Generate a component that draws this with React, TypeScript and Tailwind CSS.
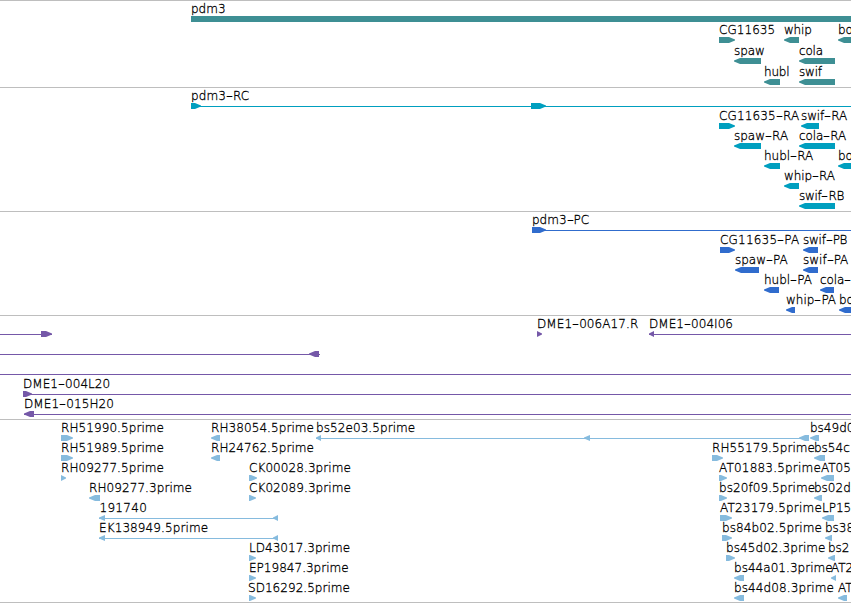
import { Fragment } from "react";
import clsx from "clsx";

type Dir = "left" | "right" | "none";
type Feature = {
  label?: string;
  start: number;
  labelStart?: number;
  spacing?: number;
  line?: number;
  // [start, end, direction]
  exons: [number, number, Dir][];
};
type TrackData = { id: string; color: string; gap?: boolean; rows: Feature[][] };

const VIEW_END = 851;

const feature = (label: string, start: number, end: number, dir: Dir, spacing = 0, labelStart = start): Feature => ({
  label,
  start,
  labelStart,
  spacing,
  exons: [[start, end, dir]],
});

const tracks: TrackData[] = [
  {
    id: "genes",
    color: "text-[#3e8f94]",
    gap: true,
    rows: [
      [feature("pdm3", 191, 860, "none")],
      [
        feature("CG11635", 719, 735, "right", 0.05),
        feature("whip", 784, 799, "left", -0.2),
        feature("bo", 838, 870, "left"),
      ],
      [feature("spaw", 734, 761, "left", -0.1), feature("cola", 799, 835, "left", -0.2)],
      [feature("hubl", 764, 780, "left", -0.2), feature("swif", 799, 835, "left", -0.2)],
    ],
  },
  {
    id: "transcripts",
    color: "text-[#009fbf]",
    rows: [
      [
        {
          label: "pdm3-RC",
          start: 191,
          spacing: 0.1,
          line: VIEW_END,
          exons: [
            [191, 201, "right"],
            [531, 546, "right"],
          ],
        },
      ],
      [feature("CG11635-RA", 719, 735, "right", 0.15), feature("swif-RA", 801, 819, "left", -0.1)],
      [feature("spaw-RA", 734, 761, "left"), feature("cola-RA", 799, 835, "left", -0.1)],
      [feature("hubl-RA", 764, 780, "left"), feature("bo", 838, 870, "left")],
      [feature("whip-RA", 784, 799, "left", -0.1)],
      [feature("swif-RB", 799, 835, "left", -0.3)],
    ],
  },
  {
    id: "proteins",
    color: "text-[#306ccd]",
    rows: [
      [{ label: "pdm3-PC", start: 532, line: VIEW_END, exons: [[532, 546, "right"]] }],
      [feature("CG11635-PA", 720, 735, "right", 0.2), feature("swif-PB", 803, 818, "left", -0.25)],
      [feature("spaw-PA", 735, 759, "left"), feature("swif-PA", 803, 818, "left")],
      [feature("hubl-PA", 764, 779, "left"), feature("cola-", 820, 834, "left", -0.1)],
      [feature("whip-PA", 786, 795, "left"), feature("bo", 839, 870, "left")],
    ],
  },
  {
    id: "bacs",
    color: "text-[#7558a8]",
    rows: [
      [
        { start: 0, line: 52, exons: [[41, 52, "right"]] },
        feature("DME1-006A17.R", 537, 542, "right", 0.08),
        { label: "DME1-004I06", start: 649, spacing: 0.05, line: VIEW_END, exons: [[649, 654, "left"]] },
      ],
      [{ start: 0, line: 320, exons: [[309, 319, "left"]] }],
      [{ start: 0, line: VIEW_END, exons: [] }],
      [{ label: "DME1-004L20", start: 23, spacing: 0.05, line: VIEW_END, exons: [[23, 32, "right"]] }],
      [{ label: "DME1-015H20", start: 24, spacing: 0.1, line: VIEW_END, exons: [[24, 34, "left"]] }],
    ],
  },
  {
    id: "ests",
    color: "text-[#86bbde]",
    rows: [
      [
        feature("RH51990.5prime", 61, 73, "right", 0.08),
        feature("RH38054.5prime", 211, 220, "left", 0.08),
        {
          label: "bs52e03.5prime",
          start: 316,
          spacing: 0.08,
          line: 809,
          exons: [
            [316, 321, "left"],
            [584, 590, "left"],
            [799, 809, "left"],
          ],
        },
        feature("bs49d0", 810, 819, "left"),
      ],
      [
        feature("RH51989.5prime", 61, 73, "right", 0.08),
        feature("RH24762.5prime", 211, 220, "left", 0.08),
        feature("RH55179.5prime", 712, 723, "right", 0.08),
        feature("bs54c", 814, 825, "left"),
      ],
      [
        feature("RH09277.5prime", 61, 66, "right", 0.08),
        feature("CK00028.3prime", 249, 257, "right", 0.08),
        feature("AT01883.5prime", 719, 727, "right", 0.2),
        feature("AT05", 821, 834, "left"),
      ],
      [
        feature("RH09277.3prime", 89, 100, "left", 0.08),
        feature("CK02089.3prime", 249, 256, "right", 0.08),
        feature("bs20f09.5prime", 719, 727, "right", 0.08),
        feature("bs02d", 814, 822, "left"),
      ],
      [
        {
          label: "191740",
          start: 99,
          labelStart: 99.5,
          spacing: 0.3,
          line: 278,
          exons: [
            [99, 105, "left"],
            [273, 278, "left"],
          ],
        },
        feature("AT23179.5prime", 720, 732, "right", 0.2),
        feature("LP15", 822, 834, "left"),
      ],
      [
        {
          label: "EK138949.5prime",
          start: 99,
          spacing: 0.1,
          line: 278,
          exons: [
            [99, 105, "left"],
            [273, 278, "left"],
          ],
        },
        feature("bs84b02.5prime", 722, 732, "right", 0.12),
        feature("bs38", 825, 832, "left"),
      ],
      [
        feature("LD43017.3prime", 249, 256, "right", 0.04),
        feature("bs45d02.3prime", 726, 735, "right", 0.08),
        feature("bs2", 828, 835, "left"),
      ],
      [
        feature("EP19847.3prime", 249, 256, "right", 0.02),
        feature("bs44a01.3prime", 734, 744, "left", 0.04),
        feature("AT2", 831, 836, "left"),
      ],
      [
        feature("SD16292.5prime", 249, 256, "right", 0.04, 248),
        feature("bs44d08.3prime", 734, 744, "left", 0.12),
        feature("AT", 838, 847, "left"),
      ],
    ],
  },
];

const exonPoints = (start: number, end: number, dir: Dir) => {
  const head = Math.min(6, end - start);
  if (dir === "right") return `${start},0 ${end - head},0 ${end},2.5 ${end},3.5 ${end - head},6 ${start},6`;
  if (dir === "left") return `${end},0 ${start + head},0 ${start},2.5 ${start},3.5 ${start + head},6 ${end},6`;
  return `${start},0 ${end},0 ${end},6 ${start},6`;
};

// Hyphens are drawn wider than the font's own
const Label = ({ text }: { text: string }) =>
  text.split("-").map((part, i) => (
    <Fragment key={i}>
      {i > 0 && <span className="inline-block w-[7px] origin-left scale-x-160">-</span>}
      {part}
    </Fragment>
  ));

const Row = ({ features }: { features: Feature[] }) => (
  <div className="relative h-5 shrink-0">
    {features.map((f, i) =>
      f.label ? (
        <span
          key={i}
          className="absolute -top-px whitespace-nowrap text-[12px] leading-[16px] font-extralight text-black [-webkit-text-stroke:0.3px_black]"
          style={{ left: f.labelStart ?? f.start, letterSpacing: f.spacing ?? 0 }}
        >
          <Label text={f.label} />
        </span>
      ) : null,
    )}
    <svg className="absolute bottom-0 left-0 h-1.5 w-full fill-current" height={6}>
      {features.map((f, i) => (
        <g key={i}>
          {f.line && <rect x={f.start} y={3} width={f.line - f.start} height={1} />}
          {f.exons.map(([start, end, dir]) => (
            <polygon key={start} points={exonPoints(start, end, dir)} />
          ))}
        </g>
      ))}
    </svg>
  </div>
);

const Track = ({ track }: { track: TrackData }) => (
  <section
    className={clsx("flex flex-col border-t border-[#bebebe] pt-px pb-0.5", track.color, track.gap && "gap-px")}
  >
    {track.rows.map((features, i) => (
      <Row key={i} features={features} />
    ))}
  </section>
);

const App = () => {
  return (
    <main className="h-[603px] w-[851px] overflow-hidden border-b border-[#bebebe] bg-white font-['DejaVu_Sans',sans-serif]">
      {tracks.map((track) => (
        <Track key={track.id} track={track} />
      ))}
    </main>
  );
};
export default App;
